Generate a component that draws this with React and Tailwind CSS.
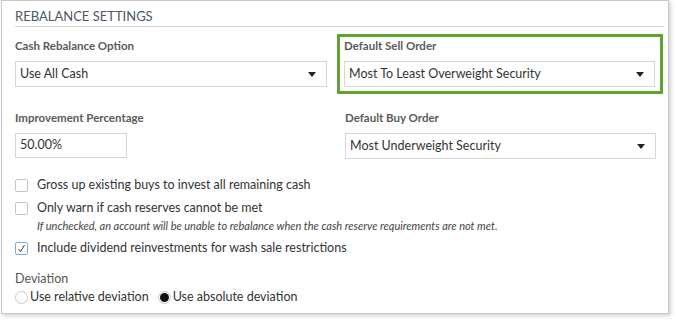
import React from 'react';

const Caret = () => (
  <svg width="8" height="5" viewBox="0 0 8 5" className="shrink-0">
    <path d="M0 0H8L4 5Z" fill="#222" />
  </svg>
);

function Select({ value, width }) {
  return (
    <div className={`flex h-[26px] items-center justify-between border border-[#d6d6d6] bg-white pl-[4px] pr-[10px] text-[12.5px] text-[#333] ${width}`}>
      <span>{value}</span>
      <Caret />
    </div>
  );
}

function Checkbox({ checked, label }) {
  return (
    <div className="flex h-[22px] items-center">
      <div
        className={`flex h-[13px] w-[13px] items-center justify-center rounded-[2px] border bg-white ${
          checked ? 'border-[#7aaee0]' : 'border-[#c4c4c4]'
        }`}
      >
        {checked && (
          <svg width="9" height="9" viewBox="0 0 9 9">
            <path d="M1.5 5L3.5 7.5L7.5 1" fill="none" stroke="#333" strokeWidth="1" />
          </svg>
        )}
      </div>
      <span className="ml-[9px] text-[12.5px] text-[#333]">{label}</span>
    </div>
  );
}

function Radio({ checked, label }) {
  return (
    <div className="flex items-center">
      <div className="flex h-[13px] w-[13px] items-center justify-center rounded-full border border-[#c8c8c8] bg-white">
        {checked && <div className="h-[9px] w-[9px] rounded-full bg-[#111]" />}
      </div>
      <span className="ml-[2px] text-[12.5px] text-[#333]">{label}</span>
    </div>
  );
}

const labelCls = 'text-[11.5px] font-bold leading-[16px] text-[#5a5a5a]';

export default function App() {
  return (
    <div className="h-[323px] w-[677px] bg-white" style={{ fontFamily: 'Lato, "Open Sans", sans-serif' }}>
      <div className="ml-[1px] h-[314px] w-[668px] border border-[#c6c6c6] bg-white pl-[13px] pr-[4px] shadow-[2px_2px_4px_rgba(0,0,0,0.18)]">
        <div className="border-b border-[#d4d4d4] pt-[9px] pb-[3px] text-[13px] leading-[13px] text-[#4d5866]">
          REBALANCE SETTINGS
        </div>

        <div className="mt-[7px] flex">
          <div className="w-[312px] pt-[4px]">
            <div className={labelCls}>Cash Rebalance Option</div>
            <div className="mt-[7px]">
              <Select value="Use All Cash" width="w-[312px]" />
            </div>
          </div>
          <div className="ml-[10px] w-[326px] border-[3px] border-[#5fa331] px-[4px] pt-[1px] pb-[4px]">
            <div className={labelCls}>Default Sell Order</div>
            <div className="mt-[7px]">
              <Select value="Most To Least Overweight Security" width="w-[311px]" />
            </div>
          </div>
        </div>

        <div className="mt-[16px] flex">
          <div className="w-[312px]">
            <div className={labelCls}>Improvement Percentage</div>
            <div className="mt-[7px] flex h-[25px] w-[112px] items-center border border-[#d6d6d6] pl-[4px] text-[12.5px] text-[#333]">
              50.00%
            </div>
          </div>
          <div className="ml-[18px]">
            <div className={labelCls}>Default Buy Order</div>
            <div className="mt-[7px]">
              <Select value="Most Underweight Security" width="w-[311px]" />
            </div>
          </div>
        </div>

        <div className="mt-[15px]">
          <Checkbox label="Gross up existing buys to invest all remaining cash" />
          <div className="mt-[1px]">
            <Checkbox label="Only warn if cash reserves cannot be met" />
          </div>
          <div className="ml-[22px] text-[11px] italic leading-[14px] text-[#444]">
            If unchecked, an account will be unable to rebalance when the cash reserve requirements are not met.
          </div>
          <div className="mt-[4px]">
            <Checkbox checked label="Include dividend reinvestments for wash sale restrictions" />
          </div>
        </div>

        <div className="mt-[11px] text-[12.5px] leading-[18px] text-[#555]">Deviation</div>
        <div className="flex items-center gap-[9px]">
          <Radio label="Use relative deviation" />
          <Radio checked label="Use absolute deviation" />
        </div>
      </div>
    </div>
  );
}
